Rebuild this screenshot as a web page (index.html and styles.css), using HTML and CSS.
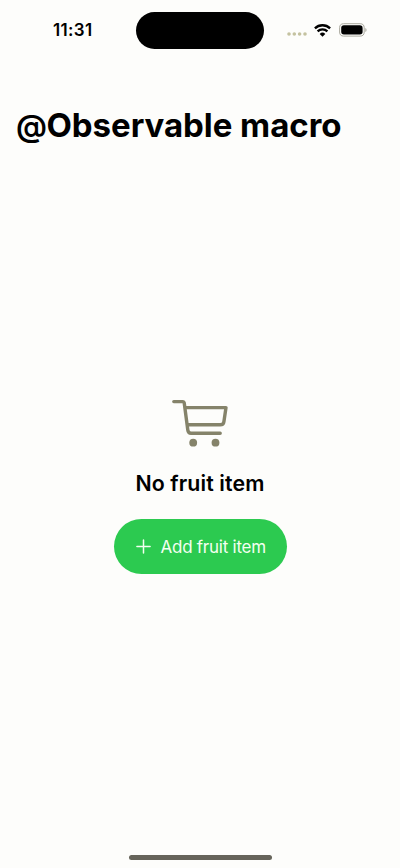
FILE: index.html
```html
<!DOCTYPE html>
<html lang="en">
<head>
<meta charset="utf-8">
<meta name="viewport" content="width=device-width">
<title>@Observable macro</title>
<link rel="stylesheet" href="styles.css">
</head>
<body>
<div class="screen">
  <header class="status">
    <time class="clock">11:31</time>
    <div class="island"></div>
    <div class="indicators">
      <svg class="cellular" width="22" height="6" viewBox="0 0 22 6"><circle cx="3" cy="3" r="1.8"/><circle cx="8.3" cy="3" r="1.8"/><circle cx="13.6" cy="3" r="1.8"/><circle cx="19" cy="3" r="1.8"/></svg>
      <svg class="wifi" width="17" height="13" viewBox="0 0 17 13"><path d="M.9 4.4A10.8 10.8 0 0 1 16.1 4.4M3.6 7.4A7 7 0 0 1 13.4 7.4" fill="none" stroke="#000" stroke-width="2.3"/><path d="M5.7 9.9A4 4 0 0 1 11.3 9.9L8.5 12.7Z"/></svg>
      <svg class="battery" width="28" height="14" viewBox="0 0 28 14"><rect x=".6" y=".7" width="24.6" height="12.4" rx="4.1" fill="none" stroke="#aaa99e"/><rect x="2.2" y="2.3" width="21.4" height="9.2" rx="2.7"/><path d="M26.3 4.9C28 5.7 28 8.1 26.3 8.9Z" fill="#aaa99e"/></svg>
    </div>
  </header>
  <h1><span class="at">@</span>Observable macro</h1>
  <main>
    <svg class="cart" width="56" height="49" viewBox="0 0 56 49">
      <path d="M1.8 2.6H11Q12 2.6 12.2 3.8L15.8 31Q16.2 34.2 19 34.2H48.2M13 8.6H54L51.9 22.7Q51.5 25.8 48.2 25.8H15.4" fill="none" stroke="#85836a" stroke-width="3.4" stroke-linecap="round" stroke-linejoin="round"/>
      <circle cx="21.2" cy="43.7" r="3.9"/><circle cx="43.5" cy="43.7" r="3.9"/>
    </svg>
    <h2>No fruit item</h2>
    <button type="button"><svg width="15" height="15" viewBox="0 0 15 15"><path d="M7.5 .9V14.1M.9 7.5H14.1" stroke="#f3fff0" stroke-width="1.5" stroke-linecap="round"/></svg><span>Add fruit item</span></button>
  </main>
  <div class="home"></div>
</div>
</body>
</html>
```
FILE: styles.css
```css
* { box-sizing: border-box; }
body { margin: 0; background: #fdfdfb; color: #000; font-family: Inter, "Liberation Sans", sans-serif; }
.screen { width: 400px; height: 868px; overflow: hidden; display: flex; flex-direction: column; }
.status { height: 60px; flex: none; display: grid; grid-template-columns: 136px 128px 136px; align-items: center; }
.clock { font-size: 17px; line-height: 20px; font-weight: 600; letter-spacing: .35px; padding-left: 53px; }
.island { height: 37px; border-radius: 19px; background: #000; }
.indicators { display: flex; align-items: center; padding-left: 22px; }
.cellular { fill: #c4c2a0; margin-top: 8px; }
.wifi { margin-left: 6px; }
.battery { margin-left: 8px; }
h1 { margin: 45px 0 0 16px; height: 40px; font-size: 33px; line-height: 40px; font-weight: 700; letter-spacing: -.05px; white-space: nowrap; }
.at { font-size: 31px; font-weight: 600; letter-spacing: -.5px; }
main { margin-top: 254px; display: flex; flex-direction: column; align-items: center; }
.cart { display: block; fill: #85836a; margin-right: 1px; }
h2 { margin: 21px 0 0; font-size: 21.3px; line-height: 28px; font-weight: 600; letter-spacing: .13px; white-space: nowrap; }
button { margin: 22px 0 0; padding: 0 20px 0 22px; width: 173px; height: 55px; border: 0; border-radius: 28px; background: #2cca50; color: #f3fff0; display: flex; align-items: center; gap: 10px; font: 400 17px/22px Inter, "Liberation Sans", sans-serif; letter-spacing: -.25px; white-space: nowrap; }
button svg { flex: none; }
.home { width: 143px; height: 5px; border-radius: 3px; background: #66645a; margin: auto auto 8px; }
```
